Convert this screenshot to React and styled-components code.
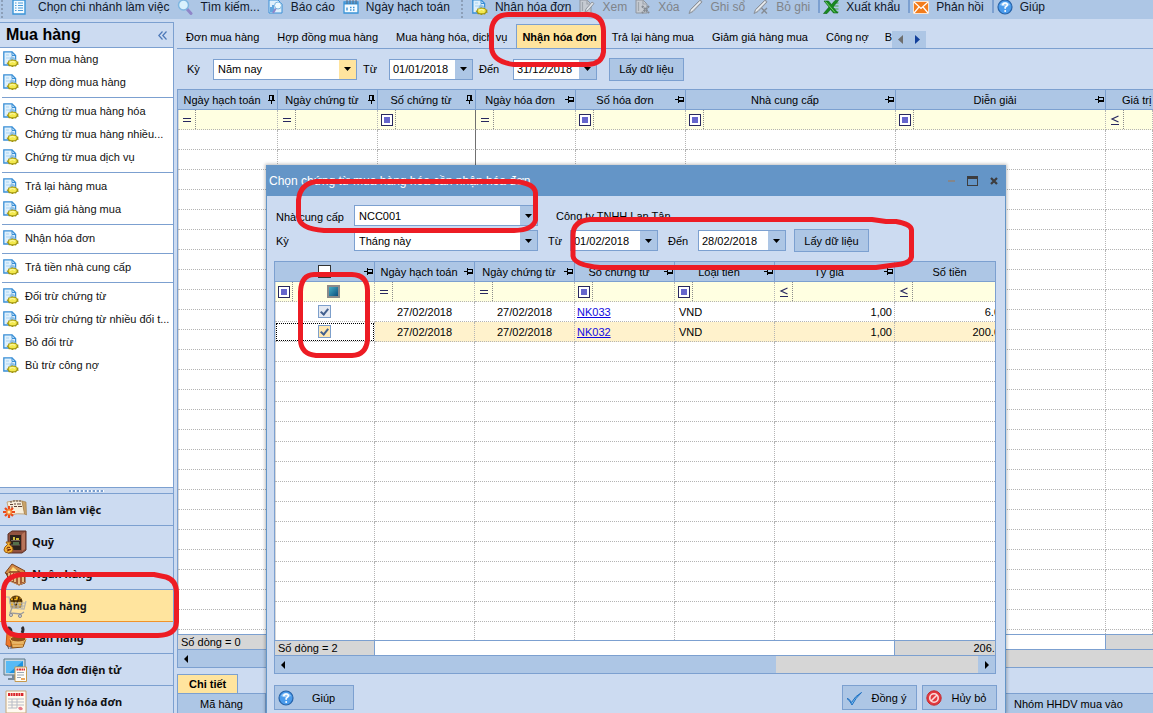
import React from "react";
import styled, { createGlobalStyle, css } from "styled-components";

const c = {
  bar: "#adc6e5",
  face: "#ccdbf1",
  line: "#7ca0d0",
  title: "#6495c7",
  accent: "#ffe49e",
  filter: "#ffffe1",
  dots: "#b4b4b4",
  grey: "#d6d6d6",
  navy: "#28285f",
  red: "#ed1c24",
};

const Global = createGlobalStyle`
  *, *::before, *::after { box-sizing: border-box; }
  body { margin: 0; overflow: hidden; background: ${c.face}; }
  body, button, input, select {
    font-family: "Liberation Sans", Arial, sans-serif;
    font-size: 11px;
    color: #000;
  }
  svg { display: block; flex: none; }
`;

const Shell = styled.div`
  position: relative;
  display: flex;
  flex-direction: column;
  height: 100vh;
  overflow: hidden;
  white-space: nowrap;
`;

/* ---------- top tool bar ---------- */

const ToolBar = styled.header`
  display: flex;
  align-items: flex-end;
  height: 19px;
  flex: none;
  overflow: hidden;
  background: ${c.bar};
`;

const ToolButton = styled.button`
  display: flex;
  align-items: center;
  gap: ${(p) => (p.$wide ? 12 : 7)}px;
  height: 25px;
  flex: none;
  padding: 0 8px 0 0;
  border: 0;
  background: none;
  font-size: 12px;
  line-height: 16px;
  color: ${(p) => (p.disabled ? "#808489" : "#10182a")};
`;

const ToolGrip = styled.span`
  width: 3px;
  height: 19px;
  flex: none;
  margin: 0 8px 0 ${(p) => (p.$first ? 1 : 3)}px;
  background: radial-gradient(circle at 1px 1px, #8c9fb8 1px, transparent 1px) 0 0 / 3px 4px;
`;

const ToolRule = styled.span`
  width: 2px;
  height: 14px;
  flex: none;
  margin: 0 3px 6px 0;
  background: ${c.line};
`;

/* ---------- side bar ---------- */

const Workspace = styled.div`
  display: flex;
  flex: 1;
  min-height: 0;
`;

const SideBar = styled.aside`
  display: flex;
  flex-direction: column;
  width: 174px;
  flex: none;
  margin: 3px 3px 0 0;
  border: solid ${c.line};
  border-width: 1px 1px 0 0;
`;

const SideHead = styled.div`
  display: flex;
  align-items: center;
  justify-content: space-between;
  height: 25px;
  flex: none;
  padding: 0 6px;
  border-bottom: 1px solid ${c.line};
`;

const SideTitle = styled.h1`
  margin: 0;
  font-size: 16px;
  line-height: 20px;
`;

const CollapseButton = styled.button`
  padding: 0;
  border: 0;
  background: none;
`;

const SideList = styled.nav`
  flex: 1;
  min-height: 0;
  overflow: hidden;
  background: #fff;
`;

const SideGroup = styled.div`
  padding-bottom: 3px;

  & + & {
    margin-left: 2px;
    padding-top: 2px;
    border-top: 1px solid ${c.line};
  }

  & + & > a {
    padding-left: 1px;
  }
`;

const SideLink = styled.a`
  display: flex;
  align-items: center;
  gap: 6px;
  height: 23px;
  padding: 0 0 1px 3px;
  color: #111;
  text-decoration: none;
`;

const SplitGrip = styled.div`
  display: flex;
  justify-content: center;
  height: 6px;
  flex: none;
  padding-top: 2px;
  border-top: 1px solid ${c.line};

  &::before {
    content: "";
    width: 35px;
    height: 2px;
    background: repeating-linear-gradient(90deg, ${c.line} 0 2px, #fff 2px 3px, ${c.face} 3px 4px);
  }
`;

const ModuleLink = styled.a`
  display: flex;
  align-items: center;
  gap: 5px;
  height: 32px;
  flex: none;
  padding-left: 3px;
  border-top: 1px solid ${c.line};
  background: ${(p) => (p.$active ? c.accent : c.face)};
  ${(p) => p.$active && css`box-shadow: 0 1px 0 #f0932b; position: relative;`}
  font: bold 11px/16px "Noto Sans", sans-serif;
  color: #111;
  text-decoration: none;
`;

const ModuleList = styled.nav`
  display: flex;
  flex-direction: column;
  flex: none;
  height: 220px;
  overflow: hidden;
`;

/* ---------- main area ---------- */

const Main = styled.main`
  display: flex;
  flex-direction: column;
  flex: 1;
  min-width: 0;
`;

const TabStrip = styled.div`
  display: flex;
  align-items: flex-end;
  height: 30px;
  flex: none;
  border-bottom: 1px solid ${c.line};
`;

const Tab = styled.button`
  height: ${(p) => (p.$small ? 19 : 24)}px;
  padding: 0 ${(p) => (p.$active ? 5 : 9)}px;
  border: 1px solid transparent;
  border-width: 1px 0 0;
  background: none;
  ${(p) =>
    p.$active &&
    css`
      border-width: 1px 1px 0;
      border-color: ${c.line};
      background: ${c.accent};
      font-weight: bold;
    `}
  ${(p) => p.$small && css`padding: 0 11px;`}
  ${(p) => p.$cut && css`width: 14px; padding: 0 0 0 7px; text-align: left; overflow: hidden;`}
`;

const TabScroller = styled.div`
  display: flex;
  align-items: center;
  justify-content: space-around;
  width: 34px;
  height: 17px;
  background: ${c.bar};
`;

const ScrollerButton = styled.button`
  padding: 0;
  border: 0;
  background: none;
`;

const FilterBar = styled.div`
  display: flex;
  align-items: center;
  height: 40px;
  flex: none;
  padding-left: 10px;
`;

const Label = styled.label`
  flex: none;
  width: ${(p) => p.$w || "auto"};
  padding: ${(p) => p.$pad || "0"};
`;

const FieldBox = styled.span`
  display: flex;
  flex: none;
  width: ${(p) => p.$w}px;
  height: 21px;
  border: 1px solid ${c.line};
  background: #fff;
`;

const Select = styled.select`
  flex: 1;
  min-width: 0;
  padding: 0 4px;
  border: 0;
  appearance: none;
  background: none;
`;

const DateInput = styled.input`
  flex: 1;
  min-width: 0;
  padding: 0 0 0 3px;
  border: 0;
  outline: 0;
  background: none;
`;

const DropButton = styled.button`
  display: grid;
  place-items: center;
  width: 17px;
  padding: 0;
  border: 0;
  background: ${(p) => (p.$hot ? c.accent : c.bar)};
`;

const Button = styled.button`
  display: flex;
  align-items: center;
  justify-content: center;
  flex: none;
  width: ${(p) => p.$w || 75}px;
  height: ${(p) => p.$h || 23}px;
  padding: 0 0 0 ${(p) => (p.$icon ? 3 : 0)}px;
  border: 1px solid ${c.line};
  background: ${c.bar};
`;

const ButtonText = styled.span`
  flex: 1;
  text-align: center;
`;

/* ---------- data grids ---------- */

const GridBox = styled.section`
  display: flex;
  flex-direction: column;
  flex: 1;
  min-height: 0;
  border: 1px solid ${c.line};
  background: #fff;
  ${(p) => p.$open && css`border-right: 0;`}
`;

const GridView = styled.div`
  flex: 1;
  min-height: 0;
  overflow: hidden;
`;

const Table = styled.table`
  width: ${(p) => p.$w || "100%"};
  table-layout: fixed;
  border-collapse: separate;
  border-spacing: 0;
`;

const Th = styled.th`
  position: relative;
  height: 20px;
  padding: 0 ${(p) => (p.$pin ? 11 : 0)}px 0 0;
  border: solid ${c.line};
  border-width: 0 1px 1px 0;
  overflow: hidden;
  background: ${c.bar};
  font-weight: normal;
  line-height: 16px;
  ${(p) =>
    p.$start &&
    css`
      padding-left: 16px;
      border-right: 0;
      text-align: left;
    `}

  & > svg {
    position: absolute;
    top: 5px;
    right: 1px;
  }
`;

const Td = styled.td`
  height: 20px;
  padding: ${(p) => p.$pad || "0 4px"};
  border: dotted ${c.dots};
  border-width: 0 1px 1px 0;
  overflow: hidden;
  line-height: 16px;
  text-align: ${(p) => p.$align || "left"};
  ${(p) => p.$frozen && css`border-right: 1px solid #707070;`}
  ${(p) =>
    p.$focus &&
    css`
      background: #fff;
      outline: 1px dotted #000;
      outline-offset: -2px;
    `}

  &:first-child {
    box-shadow: inset 1px 0 0 #d9d9d9;
  }
`;

const Row = styled.tr`
  background: ${(p) => (p.$selected ? "#fff2cc" : "#fff")};
`;

const FilterRow = styled.tr`
  background: ${c.filter};
`;

const FilterCell = styled.div`
  display: flex;
  height: 19px;
`;

const Operator = styled.span`
  display: grid;
  place-items: center;
  width: 18px;
  border-right: 1px dotted #8c8c8c;
`;

const FilterValue = styled.span`
  display: grid;
  flex: 1;
  place-items: center;
`;

const RefLink = styled.a`
  color: #1008e0;
`;

const Check = styled.input`
  display: grid;
  place-items: center;
  width: 13px;
  height: 13px;
  margin: 0 auto;
  border: 1px solid ${(p) => (p.$plain ? "#333" : "#7d9fcb")};
  appearance: none;
  background: ${(p) => p.$fill || "#fff"};
  ${(p) => p.$mixed && css`
    border: 2px solid #8b8b8b;
    background: linear-gradient(135deg, #45aec4, #0c4f80);
  `}

  &:checked::before {
    content: "";
    width: 5px;
    height: 8px;
    margin-top: -2px;
    border: solid #44618f;
    border-width: 0 2px 2px 0;
    transform: rotate(40deg);
  }
`;

const Footer = styled.div`
  display: flex;
  height: 15px;
  flex: none;
  border-top: 1px solid ${c.line};
  line-height: 14px;
`;

const FootCell = styled.div`
  flex: ${(p) => (p.$w ? "none" : 1)};
  width: ${(p) => (p.$w ? p.$w + "px" : "auto")};
  padding: 0 3px;
  overflow: hidden;
  border-right: 1px solid ${c.line};
  background: ${(p) => (p.$grey ? c.grey : "#fff")};

  &:last-child {
    border-right: 0;
  }
`;

const FootTotal = styled.span`
  display: block;
  width: 103px;
  text-align: right;
`;

const ScrollBar = styled.div`
  display: flex;
  justify-content: space-between;
  height: 18px;
  flex: none;
  border-top: 1px solid ${c.line};
  background: ${c.grey};
`;

const ScrollThumb = styled.div`
  display: flex;
  align-items: center;
  width: ${(p) => p.$w};
  padding-left: 6px;
  background: ${c.bar};
`;

const ScrollEnd = styled.button`
  display: grid;
  place-items: center;
  width: 17px;
  padding: 0;
  border: 0;
  background: ${c.bar};
`;

const Detail = styled.section`
  flex: none;
  height: 45px;
  padding-top: 6px;
`;

const DetailTabs = styled.div`
  display: flex;
  height: 19px;
`;

const DetailBox = styled.div`
  height: 20px;
  overflow: hidden;
  border: solid ${c.line};
  border-width: 1px 0 0 1px;
`;

/* ---------- dialog ---------- */

const Dialog = styled.section`
  position: absolute;
  top: 165px;
  bottom: 0;
  left: 266px;
  display: flex;
  flex-direction: column;
  width: 740px;
  border: solid ${c.title};
  border-width: 0 1px;
  background: ${c.face};
  box-shadow: 0 0 3px 1px rgba(0, 0, 0, 0.25);
`;

const DialogTitle = styled.div`
  display: flex;
  align-items: center;
  justify-content: space-between;
  height: 31px;
  flex: none;
  padding: 0 6px 0 2px;
  background: ${c.title};
  color: #fff;
  font-size: 12px;
`;

const WindowButtons = styled.div`
  display: flex;
  align-items: center;
  gap: 11px;
`;

const WindowButton = styled.button`
  padding: 0;
  border: 0;
  background: none;
`;

const DialogBody = styled.div`
  display: flex;
  flex-direction: column;
  flex: 1;
  min-height: 0;
  padding: 8px 8px 3px 7px;
`;

const FormRows = styled.div`
  display: flex;
  flex-direction: column;
  gap: 2px;
  margin-bottom: 9px;
`;

const FormRow = styled.div`
  display: flex;
  align-items: center;
  height: 23px;
`;

const DialogGrid = styled.div`
  display: flex;
  flex: 1;
  min-height: 0;
  min-width: 0;
  padding-right: 1px;

  & > section {
    min-width: 0;
  }
`;

const Actions = styled.div`
  display: flex;
  gap: 5px;
  margin-top: 11px;

  & > :first-child {
    margin-right: auto;
  }
`;

const Ink = styled.svg`
  position: absolute;
  top: 0;
  left: 0;
  pointer-events: none;
`;

/* ---------- icons ---------- */

const Svg = ({ w = 16, h = 16, children, crisp }) => (
  <svg width={w} height={h} viewBox={`0 0 ${w} ${h}`} fill="none" shapeRendering={crisp ? "crispEdges" : "auto"} aria-hidden="true">
    {children}
  </svg>
);

const DocIcon = () => (
  <Svg>
    <path d="M.8.8H9L12.6 4.500V14H.8Z" fill="#dff0fc" stroke="#3a8fd6" strokeWidth="1.3" />
    <path d="M9 .8V4.500h3.600" stroke="#3a8fd6" />
    <path d="M3 4h3M3 7h5" stroke="#a7d3f3" />
    <path d="M6 9.500 8.500 5 11 6.500l2.500 3Z" fill="#8fbfe6" />
    <path d="m3.500 12 1.500-.8.300-1.600 2-.1 1.700-1.300 1.700.8 2.100-.3.900 1.500 1.800.6-.3 1.500.6 1.200-1.900.6-.9 1.400-2-.2-1.600.9-1.600-1-2.100.1-.5-1.500Z" fill="#a0940f" />
    <ellipse cx="9.700" cy="11.900" rx="4" ry="2.300" fill="#f3e94e" />
    <path d="M7 11.200q2.500-1.300 5 0" stroke="#fffbb8" />
  </Svg>
);
const MutedDocIcon = ({ cross }) => (
  <Svg>
    <path d="M1 1h7l4 4v9H1Z" fill="#c6cbd2" stroke="#8f969f" />
    <path d="M3.500 3v9M8 1v4h4" stroke="#9fa6ae" strokeWidth="1.200" />
    {cross ? (
      <path d="m7 7 7 7m0-7-7 7" stroke="#858b93" strokeWidth="2.200" strokeDasharray="2 .8" />
    ) : (
      <path d="m6 13 1-3 6-7 2 1.500-6 7Z" fill="#dfe3e8" stroke="#8f969f" />
    )}
  </Svg>
);
const ListIcon = () => (
  <Svg w={14}>
    <path d="M1 1h12v14H1Z" fill="#f2faff" stroke="#3a94d8" strokeWidth="1.400" />
    <path d="M3 4h1.500M3 6.500h1.500M3 9h1.500M3 11.500h1.500M6 4h5M6 6.500h5M6 9h5M6 11.500h5" stroke="#4a9bd8" />
  </Svg>
);
const SearchIcon = () => (
  <Svg>
    <path d="m10 10 4 4.500" stroke="#8f86c9" strokeWidth="3" strokeLinecap="round" />
    <circle cx="6.500" cy="6" r="5" fill="#d9f1fd" stroke="#7fb6e0" strokeWidth="1.500" />
  </Svg>
);
const ReportIcon = () => (
  <Svg>
    <path d="M1 1h9l4 4v9H1Z" fill="#dff0fc" stroke="#3a8fd6" />
    <path d="M3 13V8M5 13V6" stroke="#3a8fd6" strokeWidth="1.500" />
    <path d="m8 9-3 5" stroke="#8f86c9" strokeWidth="2" />
    <circle cx="10" cy="6.500" r="3.500" fill="#eefaff" stroke="#7fb6e0" />
  </Svg>
);
const CalendarIcon = () => (
  <Svg>
    <path d="M1 3h14v11H1Z" fill="#f4fbff" stroke="#3a94d8" strokeWidth="1.300" />
    <path d="M1 4.500h14" stroke="#3a94d8" strokeWidth="2" />
    <path d="M4 1v4M7 1v4M10 1v4M13 1v4" stroke="#5a6b80" />
    <path d="M4 8.500v3M7 8.500h1.500M10 8.500h1.500M7 11h1.500M10 11h1.500" stroke="#3a94d8" strokeWidth="1.400" />
  </Svg>
);
const PencilIcon = ({ cross }) => (
  <Svg>
    <path d="m1 14.500 1.500-4L11.500 1.500q2-.5 2.500 1.500L5 12.500Z" fill="#cdd1d6" stroke="#8b929b" />
    <path d="m3 12 9-9" stroke="#eceff2" />
    {cross && <path d="m8.500 9 5.500 5.500m0-5.500-5.500 5.500" stroke="#858b93" strokeWidth="1.400" />}
  </Svg>
);
const ExcelIcon = () => (
  <Svg>
    <path d="M10 4h5.500M10 7h5.500M10 10h5.500M10 13h5.500" stroke="#49a849" />
    <path d="M1 2h4.500l3 3.500L12 1.500h3.500L10 8l5 6h-4.500L7.500 10.500 4 14.500H.5L6 8Z" fill="#178a1e" stroke="#0b6312" strokeWidth=".6" />
    <path d="m2.500 2.500 9.500 11" stroke="#8fdc83" strokeWidth=".8" />
  </Svg>
);
const MailIcon = () => (
  <Svg>
    <path d="M.5 2.500h15v12H.5Z" fill="#f27c1c" stroke="#fbe3cd" />
    <path d="m1 3 7 6.500L15 3M1 14l5-6M15 14l-5-6" stroke="#fff" strokeWidth="1.200" />
  </Svg>
);
const HelpIcon = () => (
  <Svg>
    <circle cx="8" cy="8" r="7" fill="#4a9bec" stroke="#2763a8" strokeWidth="1.200" />
    <path d="M3 6a5.500 5 0 0 1 10 0Q8 8.500 3 6" fill="#9bcbf8" />
    <path d="M5.800 6.300q0-2.300 2.300-2.300t2.200 2Q10.200 7.300 8.200 8.300v1.400" stroke="#fff" strokeWidth="1.600" />
    <circle cx="8.200" cy="12" r="1" fill="#fff" />
  </Svg>
);
const OkIcon = () => (
  <Svg>
    <path d="M1 8.500q2-.3 4.500 4Q9 6 15.500 2.500 9.500 8 6 15 4 10.500 1 8.500Z" fill="#7cc0f2" stroke="#1f6fc0" />
  </Svg>
);
const CancelIcon = () => (
  <Svg>
    <circle cx="8" cy="8" r="7.200" fill="#e33a3f" stroke="#c4292e" />
    <circle cx="8" cy="8" r="4.200" stroke="#fbdcdc" strokeWidth="1.600" />
    <path d="m5 11 6-6" stroke="#fbdcdc" strokeWidth="1.600" />
  </Svg>
);

const PinIcon = ({ fixed }) => (
  <Svg w={9} h={9} crisp>
    {fixed ? (
      <path d="M2 0h5v1H2ZM2 1h1v4H2ZM5 1h2v4H5ZM1 5h7v1H1ZM4 6h1v3H4Z" fill="#000" />
    ) : (
      <path d="M0 4h3v1H0ZM3 1h1v7H3ZM4 2h5v1H4ZM8 3h1v2H8ZM4 5h5v2H4Z" fill="#000" />
    )}
  </Svg>
);

const OperatorIcon = ({ kind }) => (
  <Svg w={12} h={12} crisp={kind !== "le"}>
    {kind === "eq" && <path d="M2 4h8v1H2ZM2 7h8v1H2Z" fill={c.navy} />}
    {kind === "has" && (
      <>
        <path d="M.5.500h11v11H.5Z" fill="#fff" stroke={c.navy} />
        <path d="M3 3h6v6H3Z" fill="#6666cc" />
      </>
    )}
    {kind === "le" && <path d="M9.500 2 3 5l6.500 3M2 10.500h8" stroke={c.navy} strokeWidth="1.200" />}
  </Svg>
);

const Caret = () => (
  <Svg w={7} h={4}>
    <path d="M0 0h7L3.500 4Z" fill="#000" />
  </Svg>
);
const SideArrow = ({ left, color = "#000", w = 4, h = 8 }) => (
  <Svg w={w} h={h}>
    <path d={left ? `M${w} 0v${h}L0 ${h / 2}Z` : `M0 0v${h}L${w} ${h / 2}Z`} fill={color} />
  </Svg>
);

const DeskIcon = () => (
  <Svg w={24} h={24}>
    <path d="M4 4q8-2 15-1l3 13q-8-1-15 1Z" fill="#f8efdc" stroke="#c3a67c" />
    <path d="m19 3 4 1 .5 13-2-1Z" fill="#c8a36c" stroke="#a07b45" strokeWidth=".6" />
    <path d="M8 3v2M11 2v2M14 2v2M17 2v2" stroke="#5b4a40" />
    <path d="M7 6.500h3M11 6h2M14 6h4M8 9h2M11 8.500h3M15 8.500h4" stroke="#5f4338" strokeWidth="1.200" />
    <path d="M6 8v12M0 14h12M2 10l8 8M10 10l-8 8" stroke="#ea4a1c" strokeWidth="2.200" />
    <circle cx="6" cy="14" r="3" fill="#f58a3c" />
    <circle cx="6" cy="14" r="1.500" fill="#fff4b8" />
  </Svg>
);
const SafeIcon = () => (
  <Svg w={24} h={24}>
    <path d="m5 4 4-3h14v19l-4 3H5Z" fill="#925340" stroke="#5c2f22" />
    <path d="M7 5h11v15H7Z" fill="#2d231c" />
    <path d="M8 10.500h9M8 15h9" stroke="#75655a" />
    <path d="M10 7h2v3h-2ZM13 8h3v2h-3Z" fill="#d1bd3f" />
    <path d="M10 12h6v3h-6Z" fill="#55704a" />
    <path d="m19 4 3-2v17l-3 2Z" fill="#b8755a" />
    <path d="M3 12h5l-1.500 2.500Q10.500 17 10 20q-.5 3-4.500 3T1 20q0-3 3.500-5.500Z" fill="#f2b033" stroke="#9a5b10" />
    <path d="M7 17.500q-3-1-3 .8t3 1.200-3 1.500" stroke="#7a2b0a" />
  </Svg>
);
const BankIcon = () => (
  <Svg w={24} h={24}>
    <path d="m3 11 8-7 11 7v10l-6 2-10-5Z" fill="#a65c32" stroke="#6d3618" />
    <path d="M2 11 9 2l13 7-2 3-10-6-5 6Z" fill="#d58a45" stroke="#7c431d" />
    <path d="M6 11v6M9 11v8M12 11v9M16 13v9M20 13v7" stroke="#f7d896" strokeWidth="1.600" />
    <path d="m7 9 3-4 5 4Z" fill="#ffdf7a" />
    <path d="M4 18l12 5 7-3" stroke="#c98d55" />
  </Svg>
);
const CartIcon = () => (
  <Svg w={24} h={24}>
    <path d="M7 7q1-5 6-5t6 5l-1 6H8Z" fill="#f2b41f" stroke="#5e3a0c" />
    <path d="M10 3l2 9M16 3l-3 9M7 7h12M12 2v3M15 4l3 2" stroke="#3c2408" strokeWidth="1.300" />
    <path d="M2 3h4l2 11 13 1 2-8M6 9h16M7 12h15M11 9v5M15 9v6M19 9v6" stroke="#b3b2b0" strokeWidth="1.200" />
    <path d="M9 14 7 19l11 1 3-2" stroke="#9c9c9e" strokeWidth="1.400" />
    <circle cx="8" cy="21" r="1.500" fill="#d8d8da" stroke="#85868a" />
    <circle cx="17" cy="22" r="1.500" fill="#d8d8da" stroke="#85868a" />
  </Svg>
);
const SellIcon = () => (
  <Svg w={24} h={24}>
    <path d="M5 2q3 0 3 4M19 1q2 2 0 6" stroke="#2d2a30" strokeWidth="3" />
    <path d="M4 7h5l2 6-4 8-4-2Z" fill="#ee7a2c" stroke="#c35512" />
    <path d="M7 13h16l-3 8-11 1Z" fill="#d8953e" stroke="#8d5213" />
    <ellipse cx="15" cy="13" rx="8" ry="3" fill="#8f4e17" stroke="#f2c46b" />
    <path d="M9 17h12M10 20h10" stroke="#f6cf86" />
    <path d="m4 19 2 4M8 20v3" stroke="#55505a" />
  </Svg>
);
const EInvoiceIcon = () => (
  <Svg w={24} h={24}>
    <path d="M1 1h21v16H1Z" fill="#c6d8e2" stroke="#5b7484" />
    <path d="M3 3h17v12H3Z" fill="#1d93e0" />
    <path d="M3 3h17L6 15H3Z" fill="#57baf5" />
    <path d="M5 20h8v2H5ZM9 17h3v3H9Z" fill="#75899a" />
    <path d="M12 9h11.500v14.500H12Z" fill="#fffdf6" stroke="#c69a4f" />
    <path d="M13.500 11.500h8.500" stroke="#e2332d" strokeWidth="2" strokeDasharray="2 .5" />
    <path d="M14 14.500h7M14 17h7M14 19.500h4" stroke="#9aa6b2" />
    <path d="M18 21h4" stroke="#e88a2c" strokeWidth="1.500" />
  </Svg>
);
const InvoiceIcon = () => (
  <Svg w={24} h={24}>
    <path d="M3 1h20v22H3Z" fill="#fffaf0" stroke="#c8a67a" />
    <path d="M5 4.500h16" stroke="#d9282d" strokeWidth="3" strokeDasharray="2 .6" />
    <path d="M5 9h16M5 12h16M5 15h16M5 18h9M9 9v9M14 9v9" stroke="#b7bcc6" />
    <path d="M15 18q3-3 5 1-3 3-5-1Z" fill="#e77c8b" />
  </Svg>
);

/* ---------- data ---------- */

const sideGroups = [
  ["Đơn mua hàng", "Hợp đồng mua hàng"],
  ["Chứng từ mua hàng hóa", "Chứng từ mua hàng nhiều...", "Chứng từ mua dịch vụ"],
  ["Trả lại hàng mua", "Giảm giá hàng mua"],
  ["Nhận hóa đơn"],
  ["Trả tiền nhà cung cấp"],
  ["Đối trừ chứng từ", "Đối trừ chứng từ nhiều đối t...", "Bỏ đối trừ", "Bù trừ công nợ"],
];

const modules = [
  ["Bàn làm việc", DeskIcon],
  ["Quỹ", SafeIcon],
  ["Ngân hàng", BankIcon],
  ["Mua hàng", CartIcon],
  ["Bán hàng", SellIcon],
  ["Hóa đơn điện tử", EInvoiceIcon],
  ["Quản lý hóa đơn", InvoiceIcon],
];

const tabs = ["Đơn mua hàng", "Hợp đồng mua hàng", "Mua hàng hóa, dịch vụ", "Nhận hóa đơn", "Trả lại hàng mua", "Giảm giá hàng mua", "Công nợ"];

const mainColumns = [
  { title: "Ngày hạch toán", w: 100, op: "eq", pin: "fixed" },
  { title: "Ngày chứng từ", w: 100, op: "eq", pin: "fixed" },
  { title: "Số chứng từ", w: 98, op: "has", pin: "fixed", frozen: true },
  { title: "Ngày hóa đơn", w: 100, op: "eq", pin: "free" },
  { title: "Số hóa đơn", w: 110, op: "has", pin: "free" },
  { title: "Nhà cung cấp", w: 210, op: "has", pin: "free" },
  { title: "Diễn giải", w: 210, op: "has", pin: "free" },
  { title: "Giá trị", op: "le", start: true },
];

const dialogColumns = [
  { check: true, w: 100, op: "has", pin: "free" },
  { title: "Ngày hạch toán", w: 100, op: "eq", pin: "free", align: "center" },
  { title: "Ngày chứng từ", w: 100, op: "eq", pin: "free", align: "center" },
  { title: "Số chứng từ", w: 100, op: "has", pin: "free", link: true, pad: "0 2px" },
  { title: "Loại tiền", w: 100, op: "has", pin: "free" },
  { title: "Tỷ giá", w: 120, op: "le", pin: "free", align: "right", pad: "0 2px" },
  { title: "Số tiền", w: 110, op: "le", align: "right" },
];

const vouchers = [
  { cells: [null, "27/02/2018", "27/02/2018", "NK033", "VND", "1,00", "6.0"] },
  { cells: [null, "27/02/2018", "27/02/2018", "NK032", "VND", "1,00", "200.0"], selected: true },
];

function DataGrid({ columns, rows = [], blank, width }) {
  return (
    <Table $w={width}>
      <colgroup>
        {columns.map((col, i) => (
          <col key={i} width={col.w} />
        ))}
      </colgroup>
      <thead>
        <tr>
          {columns.map((col, i) => (
            <Th key={i} $pin={col.pin && !col.check} $start={col.start}>
              {col.check ? <Check type="checkbox" $plain aria-label="Chọn tất cả" /> : col.title}
              {col.pin && <PinIcon fixed={col.pin === "fixed"} />}
            </Th>
          ))}
        </tr>
      </thead>
      <tbody>
        <FilterRow>
          {columns.map((col, i) => (
            <Td key={i} $pad="0" $frozen={col.frozen}>
              <FilterCell>
                <Operator>
                  <OperatorIcon kind={col.op} />
                </Operator>
                {col.check && (
                  <FilterValue>
                    <Check type="checkbox" $mixed aria-label="Lọc" />
                  </FilterValue>
                )}
              </FilterCell>
            </Td>
          ))}
        </FilterRow>
        {rows.map((row, r) => (
          <Row key={r} $selected={row.selected}>
            {columns.map((col, i) => (
              <Td key={i} $align={col.align} $pad={col.pad} $focus={row.selected && col.check}>
                {col.check && <Check type="checkbox" defaultChecked $fill={row.selected ? "#ffe7b0" : "#e4e9f2"} aria-label={row.cells[3]} />}
                {col.link ? <RefLink href="#">{row.cells[i]}</RefLink> : row.cells[i]}
              </Td>
            ))}
          </Row>
        ))}
        {Array.from({ length: blank }, (_, r) => (
          <Row key={`b${r}`}>
            {columns.map((col, i) => (
              <Td key={i} $frozen={col.frozen} />
            ))}
          </Row>
        ))}
      </tbody>
    </Table>
  );
}

const DateField = ({ id, w, value }) => (
  <FieldBox $w={w}>
    <DateInput id={id} defaultValue={value} />
    <DropButton aria-label="Mở lịch">
      <Caret />
    </DropButton>
  </FieldBox>
);

const SelectField = ({ id, w, value, hot }) => (
  <FieldBox $w={w}>
    <Select id={id}>
      <option>{value}</option>
    </Select>
    <DropButton $hot={hot} tabIndex={-1} aria-label="Mở danh sách">
      <Caret />
    </DropButton>
  </FieldBox>
);

export default function App() {
  return (
    <Shell>
      <Global />
      <ToolBar>
        <ToolGrip $first />
        <ToolButton $wide><ListIcon />Chọn chi nhánh làm việc</ToolButton>
        <ToolButton><SearchIcon />Tìm kiếm...</ToolButton>
        <ToolButton><ReportIcon />Báo cáo</ToolButton>
        <ToolButton><CalendarIcon />Ngày hạch toán</ToolButton>
        <ToolGrip />
        <ToolButton><DocIcon />Nhận hóa đơn</ToolButton>
        <ToolButton disabled><MutedDocIcon />Xem</ToolButton>
        <ToolButton disabled><MutedDocIcon cross />Xóa</ToolButton>
        <ToolButton disabled><PencilIcon />Ghi sổ</ToolButton>
        <ToolButton disabled><PencilIcon cross />Bỏ ghi</ToolButton>
        <ToolRule />
        <ToolButton><ExcelIcon />Xuất khẩu</ToolButton>
        <ToolRule />
        <ToolButton><MailIcon />Phản hồi</ToolButton>
        <ToolRule />
        <ToolButton><HelpIcon />Giúp</ToolButton>
      </ToolBar>

      <Workspace>
        <SideBar>
          <SideHead>
            <SideTitle>Mua hàng</SideTitle>
            <CollapseButton aria-label="Thu gọn">
              <Svg w={9} h={9}>
                <path d="M4.500.500.800 4.500l3.700 4M8.500.500 4.800 4.500l3.700 4" stroke="#4d79b8" strokeWidth="1.200" />
              </Svg>
            </CollapseButton>
          </SideHead>
          <SideList>
            {sideGroups.map((group) => (
              <SideGroup key={group[0]}>
                {group.map((text) => (
                  <SideLink key={text} href="#"><DocIcon />{text}</SideLink>
                ))}
              </SideGroup>
            ))}
          </SideList>
          <SplitGrip />
          <ModuleList>
            {modules.map(([text, Icon]) => (
              <ModuleLink key={text} href="#" $active={text === "Mua hàng"}><Icon />{text}</ModuleLink>
            ))}
          </ModuleList>
        </SideBar>

        <Main>
          <TabStrip>
            {tabs.map((text) => (
              <Tab key={text} $active={text === "Nhận hóa đơn"}>{text}</Tab>
            ))}
            <Tab $cut>B</Tab>
            <TabScroller>
              <ScrollerButton aria-label="Trước"><SideArrow left color="#6e6e6e" w={5} h={9} /></ScrollerButton>
              <ScrollerButton aria-label="Sau"><SideArrow color="#123f9a" w={5} h={9} /></ScrollerButton>
            </TabScroller>
          </TabStrip>
          <FilterBar>
            <Label htmlFor="period" $w="26px">Kỳ</Label>
            <SelectField id="period" w={144} value="Năm nay" hot />
            <Label htmlFor="from" $w="32px" $pad="0 0 0 6px">Từ</Label>
            <DateField id="from" w={84} value="01/01/2018" />
            <Label htmlFor="to" $w="40px" $pad="0 0 0 6px">Đến</Label>
            <DateField id="to" w={84} value="31/12/2018" />
            <Label as="span" $w="12px" />
            <Button>Lấy dữ liệu</Button>
          </FilterBar>
          <GridBox $open>
            <GridView>
              <DataGrid columns={mainColumns} blank={40} />
            </GridView>
            <Footer>
              <FootCell $w={100} $grey>Số dòng = 0</FootCell>
              <FootCell />
              <FootCell $w={47} $grey />
            </Footer>
            <ScrollBar>
              <ScrollThumb $w="60%"><SideArrow left /></ScrollThumb>
            </ScrollBar>
          </GridBox>
          <Detail>
            <DetailTabs>
              <Tab $active $small>Chi tiết</Tab>
            </DetailTabs>
            <DetailBox>
              <Table>
                <colgroup>
                  <col width="88" />
                  <col />
                  <col width="155" />
                </colgroup>
                <thead>
                  <tr>
                    <Th>Mã hàng</Th>
                    <Th />
                    <Th $start>Nhóm HHDV mua vào</Th>
                  </tr>
                </thead>
              </Table>
            </DetailBox>
          </Detail>
        </Main>
      </Workspace>

      <Dialog role="dialog" aria-label="Chọn chứng từ mua hàng hóa cần nhận hóa đơn">
        <DialogTitle>
          Chọn chứng từ mua hàng hóa cần nhận hóa đơn
          <WindowButtons>
            <WindowButton aria-label="Thu nhỏ">
              <Svg w={8} h={10} crisp><path d="M0 4h7v2H0Z" fill="#85868a" /></Svg>
            </WindowButton>
            <WindowButton aria-label="Phóng to">
              <Svg w={11} h={10} crisp><path d="M0 0h11v10H0ZM1 3v6h9V3Z" fill="#3d3d3f" fillRule="evenodd" /></Svg>
            </WindowButton>
            <WindowButton aria-label="Đóng">
              <Svg w={10} h={10}><path d="m2 2 6 6M8 2 2 8" stroke="#3d3d3f" strokeWidth="2.200" /></Svg>
            </WindowButton>
          </WindowButtons>
        </DialogTitle>
        <DialogBody>
          <FormRows>
            <FormRow>
              <Label htmlFor="vendor" $w="80px" $pad="2px 0 0 2px">Nhà cung cấp</Label>
              <SelectField id="vendor" w={184} value="NCC001" />
              <Label as="span" $pad="0 0 0 18px">Công ty TNHH Lan Tân</Label>
            </FormRow>
            <FormRow>
              <Label htmlFor="dlg-period" $w="80px" $pad="0 0 0 2px">Kỳ</Label>
              <SelectField id="dlg-period" w={184} value="Tháng này" />
              <Label htmlFor="dlg-from" $w="32px" $pad="0 0 0 10px">Từ</Label>
              <DateField id="dlg-from" w={88} value="01/02/2018" />
              <Label htmlFor="dlg-to" $w="40px" $pad="0 0 0 10px">Đến</Label>
              <DateField id="dlg-to" w={88} value="28/02/2018" />
              <Label as="span" $w="8px" />
              <Button>Lấy dữ liệu</Button>
            </FormRow>
          </FormRows>
          <DialogGrid>
            <GridBox>
              <GridView>
                <DataGrid columns={dialogColumns} rows={vouchers} blank={30} width="730px" />
              </GridView>
              <Footer>
                <FootCell $w={100} $grey>Số dòng = 2</FootCell>
                <FootCell />
                <FootCell $w={100} $grey><FootTotal>206.0</FootTotal></FootCell>
              </Footer>
              <ScrollBar>
                <ScrollThumb $w="501px"><SideArrow left /></ScrollThumb>
                <ScrollEnd aria-label="Cuộn phải"><SideArrow /></ScrollEnd>
              </ScrollBar>
            </GridBox>
          </DialogGrid>
          <Actions>
            <Button $icon $w={80} $h={25}><HelpIcon /><ButtonText>Giúp</ButtonText></Button>
            <Button $icon $h={25}><OkIcon /><ButtonText>Đồng ý</ButtonText></Button>
            <Button $icon $h={25}><CancelIcon /><ButtonText>Hủy bỏ</ButtonText></Button>
          </Actions>
        </DialogBody>
      </Dialog>

      <Ink width="1153" height="713" viewBox="0 0 1153 713" fill="none" stroke={c.red} strokeWidth="5" strokeLinejoin="round" aria-hidden="true">
        <path d="M508 14.500H588Q603 15 603.500 31V52Q602 64 588 64.500H514Q493 62 491.500 48V30Q493 15 508 14.500Z" />
        <path d="M316 181.500H514Q535 183 535.500 193V220Q533 230 514 230.500H324Q300 229 298.500 217V200Q300 184 316 181.500Z" />
        <path d="M590 219.500H872L886 221.500H896Q911 224 911.500 230V257Q910 264 894 265L876 267.500H600Q574 265 573 256V235Q573 221 590 219.500Z" />
        <path d="M314 274.500H352Q367 275 367.500 290V340Q366 355 352 355.500H316Q301 354 300.500 340V292Q301 275 314 274.500Z" />
        <path d="M22 574.500H154L166 577Q176 580 176.500 592V622Q176 635 158 635.500H18Q4 634 3.500 620V590Q5 576 22 574.500Z" />
      </Ink>
    </Shell>
  );
}
